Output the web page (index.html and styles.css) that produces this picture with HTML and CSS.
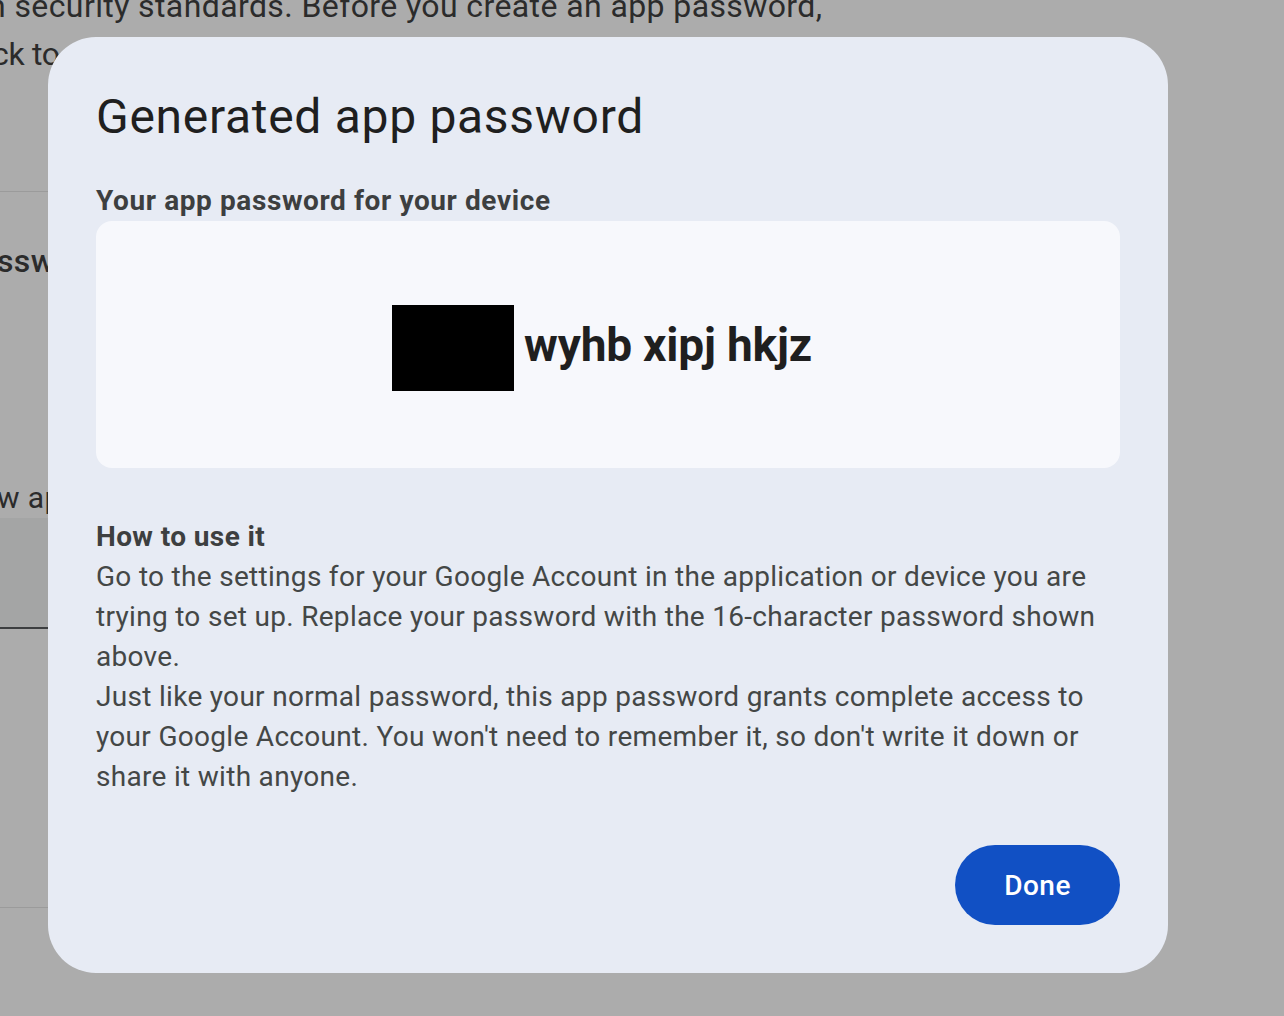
FILE: index.html
```html
<!DOCTYPE html>
<html lang="en">
<head>
<meta charset="utf-8">
<title>Generated app password</title>
<link rel="stylesheet" href="styles.css">
</head>
<body>
<div class="page">
  <p class="bg-line bg-first">n security standards. Before you create an app password,</p>
  <p class="bg-line bg-second">ck to</p>
  <div class="bg-rule bg-rule-1"></div>
  <p class="bg-label">ssw</p>
  <p class="bg-small">w ap</p>
  <div class="bg-field"></div>
  <div class="bg-rule bg-rule-2"></div>
</div>

<div class="dialog" role="dialog" aria-labelledby="dlg-title">
  <h1 id="dlg-title" class="dialog-title">Generated app password</h1>
  <h2 class="device-label">Your app password for your device</h2>
  <div class="password-box">
    <span class="redacted"></span>
    <span class="password-text">wyhb xipj hkjz</span>
  </div>
  <h3 class="howto-title">How to use it</h3>
  <p class="howto-text">Go to the settings for your Google Account in the application or device you are trying to set up. Replace your password with the 16-character password shown above.</p>
  <p class="howto-text">Just like your normal password, this app password grants complete access to your Google Account. You won't need to remember it, so don't write it down or share it with anyone.</p>
  <div class="actions">
    <button class="done-btn" type="button">Done</button>
  </div>
</div>
</body>
</html>
```
FILE: styles.css
```css
html, body {
  margin: 0;
  padding: 0;
}
body {
  width: 1284px;
  height: 1016px;
  overflow: hidden;
  background: #acacac;
  font-family: Roboto, "Noto Sans", Arial, sans-serif;
  position: relative;
}
.page {
  color: #2b2b2b;
}
.bg-line, .bg-label, .bg-small {
  margin: 0;
  white-space: nowrap;
}
.bg-line, .bg-label {
  font-size: 32px;
  line-height: 46px;
  letter-spacing: 0.4px;
}
.bg-first {
  margin-top: -17px;
  margin-left: -12px;
}
.bg-second {
  margin-left: -8px;
  margin-top: 2px;
  letter-spacing: -0.3px;
}
.bg-rule {
  width: 48px;
  height: 1px;
  background: #9b9b9b;
}
.bg-rule-1 {
  margin-top: 114px;
}
.bg-label {
  margin-top: 46px;
  font-weight: 500;
  margin-left: -3px;
}
.bg-small {
  margin-top: 194px;
  margin-left: -3px;
  font-size: 30px;
  line-height: 40px;
  letter-spacing: 0.4px;
}
.bg-field {
  width: 48px;
  height: 109px;
  background: #a4a5a5;
  border-bottom: 2px solid #3c3e40;
}
.bg-rule-2 {
  margin-top: 278px;
}

.dialog {
  position: absolute;
  left: 48px;
  top: 37px;
  width: 1120px;
  height: 936px;
  box-sizing: border-box;
  padding: 48px 48px 48px;
  background: #e7ebf4;
  border-radius: 48px;
  display: flex;
  flex-direction: column;
  color: #1f1f1f;
}
.dialog-title {
  margin: 0;
  font-size: 48px;
  font-weight: 400;
  line-height: 64px;
  letter-spacing: 0.7px;
}
.device-label {
  margin: 36px 0 0;
  font-size: 28px;
  font-weight: 700;
  line-height: 32px;
  letter-spacing: 0.6px;
  color: #3d3f40;
}
.password-box {
  margin-top: 4px;
  height: 247px;
  padding-right: 12px;
  background: #f7f8fc;
  border-radius: 16px;
  display: flex;
  align-items: center;
  justify-content: center;
  gap: 10px;
}
.redacted {
  display: block;
  width: 122px;
  height: 86px;
  margin-top: 6px;
  background: #000;
}
.password-text {
  font-size: 46px;
  font-weight: 700;
  letter-spacing: -0.2px;
  color: #1f1f1f;
}
.howto-title {
  margin: 49px 0 0;
  font-size: 28px;
  font-weight: 700;
  line-height: 40px;
  letter-spacing: 0.4px;
  color: #3d3f40;
}
.howto-text {
  margin: 0;
  font-size: 28px;
  line-height: 40px;
  letter-spacing: 0.3px;
  color: #444746;
}
.actions {
  margin-top: auto;
  display: flex;
  justify-content: flex-end;
}
.done-btn {
  width: 165px;
  height: 80px;
  border: none;
  border-radius: 40px;
  background: #1150c4;
  color: #fff;
  font-family: Roboto, "Noto Sans", Arial, sans-serif;
  font-size: 28px;
  font-weight: 500;
  letter-spacing: 0.5px;
}
```
